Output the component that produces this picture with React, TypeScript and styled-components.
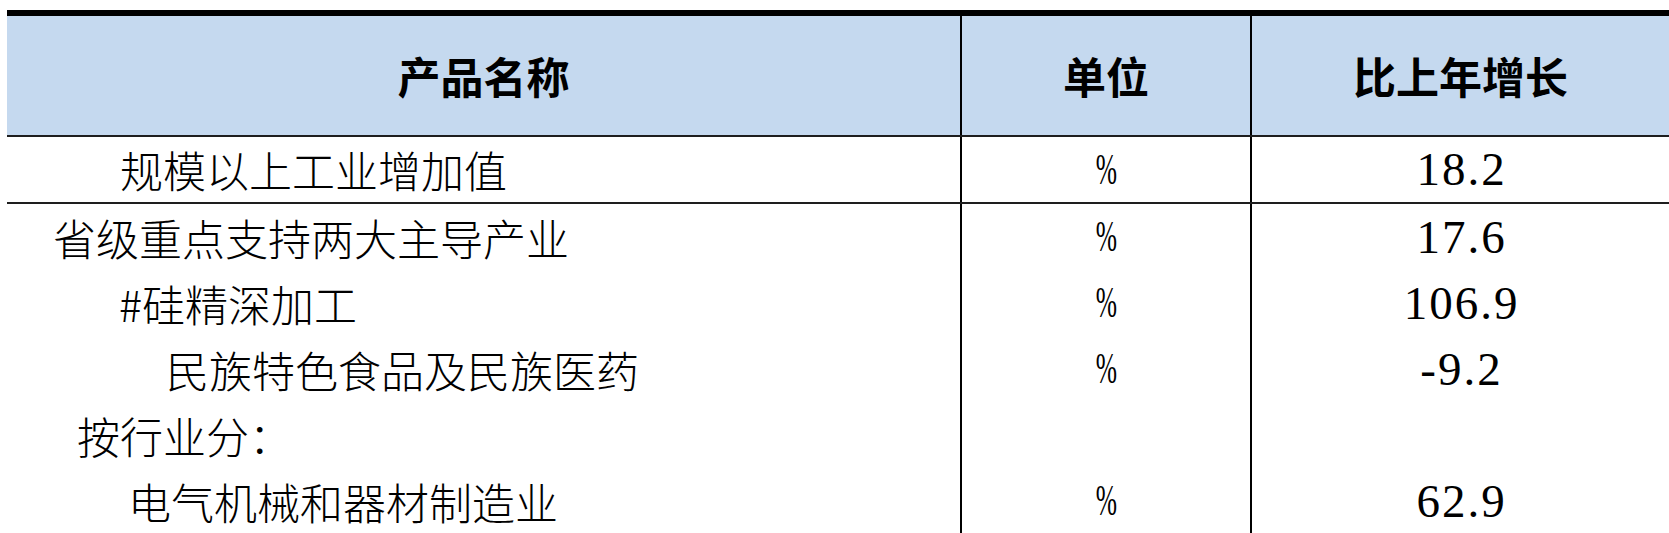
import * as React from 'react';
import styled, { createGlobalStyle } from 'styled-components';

const GlobalStyle = createGlobalStyle`
    html, body {
        margin: 0;
        padding: 0;
        background: #ffffff;
    }
    body {
        font-family: "Noto Sans CJK SC", sans-serif;
        color: #000;
    }
`;

const Page = styled.div`
    padding: 10px 0 0 7px;
    width: 1662px;
    overflow: hidden;
`;

const Table = styled.div`
    border-top: 6px solid #000;
    display: flex;
    flex-direction: column;
`;

const Row = styled.div<{ $height: number; $ruled?: boolean; $head?: boolean }>`
    display: grid;
    grid-template-columns: 955px 290px 1fr;
    height: ${p => p.$height}px;
    background: ${p => (p.$head ? '#c5d9ef' : 'transparent')};
    border-bottom: ${p => (p.$ruled ? '2px solid #1e1e1e' : 'none')};
`;

const Cell = styled.div<{ $divider?: boolean }>`
    box-sizing: border-box;
    display: flex;
    align-items: center;
    justify-content: center;
    border-right: ${p => (p.$divider ? '2px solid #000' : 'none')};
    min-width: 0;
`;

const HeadText = styled.span`
    font-family: "Noto Sans CJK SC", sans-serif;
    font-size: 43px;
    font-weight: 700;
    line-height: 1;
`;

const NameCell = styled(Cell)<{ $indent: number }>`
    justify-content: flex-start;
    padding-left: ${p => p.$indent}px;
`;

const NameText = styled.span`
    font-family: "Noto Sans CJK SC", sans-serif;
    font-size: 43px;
    font-weight: 300;
    line-height: 1;
    white-space: nowrap;
`;

const Percent = styled.span`
    display: inline-block;
    font-family: "Liberation Serif", serif;
    font-size: 44px;
    line-height: 1;
    transform: scaleX(0.58);
`;

const Value = styled.span`
    font-family: "Liberation Serif", serif;
    font-size: 47px;
    line-height: 1;
    letter-spacing: 2px;
    padding-left: 2px;
`;

type Item = {
    name: string;
    indent: number;
    unit: string;
    value: string;
};

const items: Item[] = [
    { name: '规模以上工业增加值', indent: 113, unit: '%', value: '18.2' },
    { name: '省级重点支持两大主导产业', indent: 46, unit: '%', value: '17.6' },
    { name: '#硅精深加工', indent: 112, unit: '%', value: '106.9' },
    { name: '民族特色食品及民族医药', indent: 159, unit: '%', value: '-9.2' },
    { name: '按行业分：', indent: 70, unit: '', value: '' },
    { name: '电气机械和器材制造业', indent: 121, unit: '%', value: '62.9' },
];

export default function App() {
    return (
        <>
            <GlobalStyle />
            <Page>
                <Table>
                    <Row $height={119} $head $ruled>
                        <Cell $divider><HeadText>产品名称</HeadText></Cell>
                        <Cell $divider><HeadText>单位</HeadText></Cell>
                        <Cell><HeadText>比上年增长</HeadText></Cell>
                    </Row>
                    {items.map((item, index) => (
                        <Row key={item.name} $height={index === 0 ? 65 : 66} $ruled={index === 0}>
                            <NameCell $divider $indent={item.indent}>
                                <NameText>{item.name}</NameText>
                            </NameCell>
                            <Cell $divider>
                                {item.unit && <Percent>{item.unit}</Percent>}
                            </Cell>
                            <Cell>
                                {item.value && <Value>{item.value}</Value>}
                            </Cell>
                        </Row>
                    ))}
                </Table>
            </Page>
        </>
    );
}
